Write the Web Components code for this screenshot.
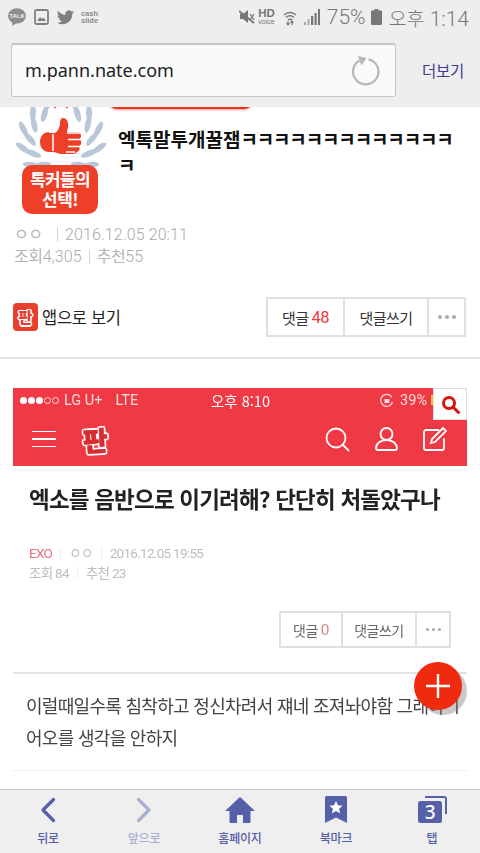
<!DOCTYPE html>
<html lang="ko">
<head>
<meta charset="utf-8">
<title>m.pann.nate.com</title>
<style>
  html, body { margin: 0; height: 100%; background: #fff; }
  body { font-family: "Noto Sans CJK KR", "Noto Sans", sans-serif; overflow: hidden; }
</style>
</head>
<body>
<phone-screen>
  <status-bar slot="top"></status-bar>
  <url-bar slot="top" url="m.pann.nate.com"></url-bar>
  <article-head>엑톡말투개꿀잼<span style="letter-spacing:-1.150px">ㅋㅋㅋㅋㅋㅋㅋㅋㅋㅋㅋㅋㅋㅋ</span></article-head>
  <action-row comments="48"></action-row>
  <embedded-shot></embedded-shot>
  <fab-button slot="over"></fab-button>
  <bottom-nav slot="bottom"></bottom-nav>
</phone-screen>

<script>
const KR = `"Noto Sans CJK KR", "Noto Sans", sans-serif`;

class PhoneScreen extends HTMLElement {
  constructor() {
    super();
    this.attachShadow({ mode: "open" });
    this.shadowRoot.innerHTML = `
    <style>
      :host { display: flex; flex-direction: column; width: 480px; height: 853px; position: relative; overflow: hidden; }
      .top { flex: none; position: relative; z-index: 2; background: #eeeeee; height: 107px; }
      .page { flex: 1; min-height: 0; overflow: hidden; background: #fff; }
      .bottom { flex: none; }
    </style>
    <div class="top"><slot name="top"></slot></div>
    <div class="page"><slot></slot></div>
    <slot name="over"></slot>
    <div class="bottom"><slot name="bottom"></slot></div>`;
  }
}

class StatusBar extends HTMLElement {
  constructor() {
    super();
    this.attachShadow({ mode: "open" });
    this.shadowRoot.innerHTML = `
    <style>
      :host { display: flex; align-items: center; height: 34px; padding: 0 11px 0 8px; color: #777; font-family: "Roboto", sans-serif; }
      svg { display: block; flex: none; }
      .left { display: flex; align-items: center; gap: 8px; }
      .cash { font: 700 7.5px/7.5px "Liberation Sans", sans-serif; color: #8a8a8a; text-align: center; margin-left: -1px; }
      .right { margin-left: auto; display: flex; align-items: center; }
      .hd { font: 700 11.500px/10px "Liberation Sans", sans-serif; text-align: center; margin: 0 8px 0 3px; color: #777; }
      .hd small { display: block; font-size: 7px; font-weight: 400; line-height: 8px; }
      .pct { font-size: 21px; font-weight: 300; margin: 0 5px 0 7px; color: #777; }
      .time { font: 300 21px "Roboto", ${KR}; margin-left: 7px; color: #777; white-space: nowrap; }
      .time span { font: 300 19.500px ${KR}; }
    </style>
    <div class="left">
      <svg width="18" height="18" viewBox="0 0 18 18"><ellipse cx="9" cy="7.8" rx="9" ry="7.6" fill="#8c8c8c"/><path d="M4 13l.6 5 4.400-3.400z" fill="#8c8c8c"/><text x="9" y="10" font-family="Liberation Sans" font-size="6" font-weight="700" text-anchor="middle" fill="#eee">TALK</text></svg>
      <svg width="15" height="16" viewBox="0 0 15 16"><rect x="1" y="1" width="13" height="14" rx="1.5" fill="none" stroke="#808080" stroke-width="1.8"/><path d="M3 12l3-4 2 2 1.500-1.500L12 12z" fill="#808080"/></svg>
      <svg width="17" height="15" viewBox="0 0 24 20"><path fill="#808080" d="M24 2.400a9.800 9.800 0 0 1-2.800.8 4.900 4.900 0 0 0 2.200-2.700 9.900 9.900 0 0 1-3.100 1.200 4.900 4.900 0 0 0-8.400 4.500A14 14 0 0 1 1.700.9a4.900 4.900 0 0 0 1.500 6.600 4.900 4.900 0 0 1-2.200-.6 4.900 4.900 0 0 0 3.900 4.900 4.900 4.900 0 0 1-2.200.1 4.900 4.900 0 0 0 4.600 3.400A9.900 9.900 0 0 1 0 17.300 14 14 0 0 0 21.500 4.900a10 10 0 0 0 2.500-2.500z"/></svg>
      <div class="cash">cash<br>slide</div>
    </div>
    <div class="right">
      <svg width="16" height="16" viewBox="0 0 16 16"><path d="M1 5h3l5-4v13l-5-4H1z" fill="#777"/><path d="M0 2l15 12" stroke="#777" stroke-width="1.800"/><path d="M11 5l4 6M15 5l-4 6" stroke="#777" stroke-width="1.300"/></svg>
      <div class="hd">HD<small>voice</small></div>
      <svg width="14" height="17" viewBox="0 0 14 17"><path d="M1 6a8.500 8.500 0 0 1 12 0M3 8.500a5.500 5.500 0 0 1 8 0M5 11a2.800 2.800 0 0 1 4 0" fill="none" stroke="#777" stroke-width="1.500"/><path d="M5 12v4M3.500 14l1.500 2 1.500-2M9 16v-4M7.500 14l1.500-2 1.500 2" fill="none" stroke="#777" stroke-width="1.100"/></svg>
      <svg width="16" height="16" viewBox="0 0 16 16" style="margin-left:7px"><path d="M0 13h2v3H0zM3.500 10h2v6h-2z" fill="#aaa"/><path d="M7 7h2.200v9H7zM10.500 4h2.200v12h-2.200zM14 0h2v16h-2z" fill="#777"/></svg>
      <span class="pct">75%</span>
      <svg width="11" height="16" viewBox="0 0 11 16"><path d="M3.500 0h4v1.500H10a1 1 0 0 1 1 1V15a1 1 0 0 1-1 1H1a1 1 0 0 1-1-1V2.500a1 1 0 0 1 1-1h2.500z" fill="#777"/></svg>
      <span class="time"><span>오후</span> 1:14</span>
    </div>`;
  }
}

class UrlBar extends HTMLElement {
  constructor() {
    super();
    this.attachShadow({ mode: "open" });
    this.shadowRoot.innerHTML = `
    <style>
      :host { display: flex; align-items: center; padding: 9px 16px 0 11px; }
      .box { flex: none; box-sizing: border-box; width: 385px; height: 54px; background: #fafafa; border: 1px solid #c6c6c6; border-top: 2px solid #c6c6c6; border-radius: 3px; display: flex; align-items: center; justify-content: space-between; padding: 0 15px 0 13px; }
      .url { font: 400 18px "Noto Sans", sans-serif; color: #222; margin-top: -2px; }
      .more { margin-left: auto; font: 400 15.500px ${KR}; color: #3f3a92; letter-spacing: -.3px; }
      svg { display: block; }
    </style>
    <div class="box">
      <span class="url">${this.getAttribute("url")}</span>
      <svg width="30" height="30" viewBox="0 0 30 30" fill="none"><path d="M18.500 3.200A12.700 12.700 0 1 1 9.500 4.500" stroke="#b7b7b7" stroke-width="2.200"/><path d="M8 0l8.500 2-5 7.500z" fill="#b7b7b7"/></svg>
    </div>
    <span class="more">더보기</span>`;
  }
}

class ArticleHead extends HTMLElement {
  constructor() {
    super();
    this.attachShadow({ mode: "open" });
    let leaves = "";
    for (let i = 0; i < 10; i++) {
      const a = 18 + i * 14;
      const r = i % 2 ? 31 : 39;
      for (const s of [-1, 1]) {
        leaves += `<ellipse cx="0" cy="0" rx="3" ry="8.500" fill="#b9c8d8" transform="translate(46 33) rotate(${s * a}) translate(0 ${-r}) rotate(${-s * 48})"/>`;
      }
    }
    this.shadowRoot.innerHTML = `
    <style>
      :host { display: block; position: relative; height: 190px; color: #111; }
      .pill { position: absolute; left: 108px; top: -8px; width: 145px; height: 10px; border-radius: 0 0 9px 9px; background: #f2301c; box-shadow: 0 1px 2px #f59a8e; }
      .top { display: flex; height: 107px; }
      .badge { flex: none; width: 92px; height: 107px; margin-left: 15px; position: relative; }
      .badge svg { display: block; position: absolute; left: 0; top: 0; }
      .tag { position: absolute; left: 7px; top: 58px; width: 76px; height: 49px; box-sizing: border-box; border-radius: 10px; background: #ee3f28; color: #fff; font: 700 17px/20px ${KR}; text-align: center; padding-top: 4px; letter-spacing: -.6px; }
      .title { flex: 1; margin: 19px 14px 0 11px; font: 700 19px/26px ${KR}; letter-spacing: 0; word-break: break-all; }
      .meta { padding: 9px 0 0 14px; font: 300 16px/21px "Roboto", ${KR}; color: #aaa; white-space: nowrap; letter-spacing: .1px; }
      .meta i { font-style: normal; display: inline-block; width: 1px; height: 15px; background: #d4d4d4; margin: 0 7px; vertical-align: -2px; }
      .kr { font-family: ${KR}; font-weight: 400; letter-spacing: -.4px; color: #b4b4b4; }
      .who { display: inline-block; width: 36px; }
    </style>
    <div class="pill"></div>
    <div class="top">
      <div class="badge">
        <svg width="92" height="70" viewBox="0 0 92 70">${leaves}
          <path d="M39 -2l1.500 3M53 -2l-1.500 3" stroke="#ee3f28" stroke-width="2"/>
          <path d="M34 26h6c3-2 5-6 5-10 0-3 1-5 3-5 4 0 6 5 5 9l-1 5h10c5 0 5 6 2 7 3 1 3 6 0 7 1 2 1 5-2 6-1 1-2 2-4 2H47c-4 0-6-2-9-2h-4c-5 0-9-4-9-10s4-10 9-10z" fill="#ee3f28" stroke="#fff" stroke-width="2" paint-order="stroke"/>
          <path d="M38 27v17M52 26h13M53 32.500h13M53 39.500h12M51 45h9" stroke="#fff" stroke-width="1.500" fill="none"/>
        </svg>
        <div class="tag">톡커들의<br>선택!</div>
      </div>
      <div class="title"><slot></slot></div>
    </div>
    <div class="meta"><span class="kr who">ㅇㅇ</span><i></i>2016.12.05 20:11<br><span class="kr">조회</span>4,305<i></i><span class="kr">추천</span>55</div>`;
  }
}

class ReplyButtons extends HTMLElement {
  constructor() {
    super();
    this.attachShadow({ mode: "open" });
    this.shadowRoot.innerHTML = `
    <style>
      :host { display: inline-flex; box-sizing: border-box; height: var(--h, 40px); border: 2px solid #e0e0e0; font: 400 var(--fs, 15px) ${KR}; color: #333; background: #fff; letter-spacing: -.5px; }
      div { display: flex; align-items: center; justify-content: center; box-sizing: border-box; white-space: nowrap; }
      div + div { border-left: 2px solid #e0e0e0; }
      .a { width: var(--a, 75px); }
      .b { width: var(--b, 84px); }
      .c { width: var(--c, 37px); color: #aaa; gap: 3px; }
      .c span { width: var(--d, 4px); height: var(--d, 4px); border-radius: 50%; background: #aaa; }
      b { font-weight: 400; color: var(--num, #f03c3c); font-family: "Roboto", sans-serif; font-size: 1.1em; margin-left: 3px; }
    </style>
    <div class="a">댓글<b>${this.getAttribute("count")}</b></div>
    <div class="b">댓글쓰기</div>
    <div class="c"><span></span><span></span><span></span></div>`;
  }
}

class ActionRow extends HTMLElement {
  constructor() {
    super();
    this.attachShadow({ mode: "open" });
    this.shadowRoot.innerHTML = `
    <style>
      :host { display: block; height: 60px; border-bottom: 2px solid #e2e2e2; }
      .row { display: flex; align-items: center; padding: 0 14px 0 13px; height: 40px; }
      .app { display: flex; align-items: center; gap: 4px; font: 400 16.500px ${KR}; color: #222; letter-spacing: -.3px; }
      .icon { width: 25px; height: 28px; border-radius: 4px; background: #e8402f; color: #e8402f; font: 900 15px/27px ${KR}; text-align: center; letter-spacing: 0;
        text-shadow: 1.500px 0 #fff, -1.500px 0 #fff, 0 1.500px #fff, 0 -1.500px #fff, 1px 1px #fff, -1px 1px #fff, 1px -1px #fff, -1px -1px #fff; }
      reply-buttons { margin-left: auto; }
    </style>
    <div class="row">
      <div class="app"><div class="icon">판</div>앱으로 보기</div>
      <reply-buttons count="${this.getAttribute("comments")}"></reply-buttons>
    </div>`;
  }
}

class EmbeddedShot extends HTMLElement {
  constructor() {
    super();
    this.attachShadow({ mode: "open" });
    this.shadowRoot.innerHTML = `
    <style>
      :host { display: block; position: relative; margin: 29px 13px 0; color: #333; }
      .blur { filter: blur(.35px); }
      .red { background: #ef3a46; height: 78px; color: #fff; }
      .ios { display: flex; align-items: center; height: 24px; padding: 0 7px; font: 400 14.500px "Roboto", sans-serif; color: #fbdcdc; position: relative; }
      .dots { display: flex; gap: 1px; margin-right: 5px; }
      .dots u { width: 7px; height: 7px; border-radius: 50%; background: #fff; box-sizing: border-box; }
      .dots u.o { background: none; border: 1px solid #fbdcdc; }
      .lte { margin-left: 13px; }
      .clock { position: absolute; left: 198px; font: 400 14.500px ${KR}; color: #fff; white-space: nowrap; }
      .batt { margin-left: auto; margin-right: 26px; display: flex; align-items: center; gap: 6px; }
      .batt s { width: 3px; height: 10px; background: #f3c63f; margin-left: -2px; }
      .nav { display: flex; align-items: center; height: 54px; padding: 0 20px 6px 19px; }
      .burger { width: 24px; height: 14px; border-top: 1.500px solid #fff; border-bottom: 1.500px solid #fff; position: relative; }
      .burger::after { content: ""; position: absolute; left: 0; right: 0; top: 6px; height: 1.500px; background: #fff; }
      .logo { margin-left: 27px; font: 900 27px/1 ${KR}; color: #d92a30; -webkit-text-stroke: .6px #d92a30; transform: rotate(-3deg);
        text-shadow: 2px 0 #fff, -2px 0 #fff, 0 2px #fff, 0 -2px #fff, 1.500px 1.500px #fff, -1.500px 1.500px #fff, 1.500px -1.500px #fff, -1.500px -1.500px #fff; }
      .tools { margin-left: auto; display: flex; align-items: center; gap: 25px; }
      svg { display: block; }
      h2 { margin: 0; padding: 17px 16px 0; font: 700 22.500px/30px ${KR}; color: #222; letter-spacing: -.8px; white-space: nowrap; }
      .meta { margin-top: 30px; padding-left: 16px; font: 400 13.500px/20px "Roboto", ${KR}; color: #bdbdbd; letter-spacing: -.7px; white-space: nowrap; }
      .meta em { font-style: normal; color: #e0707a; }
      .meta i { display: inline-block; width: 1px; height: 12px; background: #eee; margin: 0 8px; vertical-align: -1px; }
      .btns { display: flex; justify-content: flex-end; padding: 28px 16px 0 0; }
      reply-buttons { --h: 37px; --fs: 14px; --a: 60px; --b: 74px; --c: 34px; --d: 3px; --num: #e0848c; color: #666; }
      .body { margin-top: 24px; box-sizing: border-box; border-top: 2px solid #e4e4e4; border-bottom: 1px solid #eee; padding: 15px 0 0 13px; height: 99px; font: 400 18px/32px ${KR}; color: #444; letter-spacing: -.7px; white-space: nowrap; overflow: hidden; }
      .find { position: absolute; right: 0; top: 0; width: 34px; height: 32px; box-sizing: border-box; background: #fff; border: 1px solid #ddd; display: flex; align-items: center; justify-content: center; }
    </style>
    <div class="blur">
      <div class="red">
        <div class="ios"><span class="dots"><u></u><u></u><u></u><u class="o"></u><u class="o"></u></span>LG U+<span class="lte">LTE</span><span class="clock">오후 8:10</span>
          <span class="batt"><svg width="14" height="14" viewBox="0 0 14 14" fill="none"><path d="M12 4.500A6 6 0 1 0 12.500 9" stroke="#fbdcdc" stroke-width="1.200"/><rect x="4.500" y="6" width="5" height="4" fill="#fbdcdc"/></svg>39%<s></s></span></div>
        <div class="nav">
          <div class="burger"></div>
          <div class="logo">판</div>
          <div class="tools">
            <svg width="25" height="25" viewBox="0 0 25 25" fill="none" stroke="#fff" stroke-width="1.800"><circle cx="11" cy="11" r="9.500"/><path d="M18 18l6 6"/></svg>
            <svg width="23" height="24" viewBox="0 0 23 24" fill="none" stroke="#fff" stroke-width="1.800"><circle cx="11.500" cy="7" r="6"/><path d="M11.500 13C5 13 1 17 1 21c0 1.500 1 2 2 2h17c1 0 2-.5 2-2 0-4-4-8-10.500-8z"/></svg>
            <svg width="24" height="24" viewBox="0 0 24 24" fill="none" stroke="#fff" stroke-width="1.800"><path d="M16 3H3a2 2 0 0 0-2 2v16a2 2 0 0 0 2 2h16a2 2 0 0 0 2-2V11"/><path d="M8 16l1-4L20 1l3 3-11 11z"/></svg>
          </div>
        </div>
      </div>
      <h2>엑소를 음반으로 이기려해? 단단히 처돌았구나</h2>
      <div class="meta"><em>EXO</em><i></i>ㅇㅇ<i></i>2016.12.05 19:55<br>조회 84<i></i>추천 23</div>
      <div class="btns"><reply-buttons count="0"></reply-buttons></div>
      <div class="body">이럴때일수록 침착하고 정신차려서 쟤네 조져놔야함 그래야 ㅣ<br>어오를 생각을 안하지</div>
    </div>
    <div class="find"><svg width="19" height="19" viewBox="0 0 19 19" fill="none" stroke="#d8140c" stroke-width="3"><circle cx="8" cy="8" r="5.500"/><path d="M12 12l5.500 5.500" stroke-linecap="round"/></svg></div>`;
  }
}

class FabButton extends HTMLElement {
  constructor() {
    super();
    this.attachShadow({ mode: "open" });
    this.shadowRoot.innerHTML = `
    <style>
      :host { display: block; position: absolute; left: 414px; top: 662px; width: 48px; height: 48px; border-radius: 50%; background: #f02a0e; box-shadow: 5px 5px 1px rgba(120,120,120,.4); }
      svg { display: block; margin: 12px; }
    </style>
    <svg width="24" height="24" viewBox="0 0 24 24"><path d="M12 0v24M0 12h24" stroke="#fff" stroke-width="2.400"/></svg>`;
  }
}

class BottomNav extends HTMLElement {
  constructor() {
    super();
    this.attachShadow({ mode: "open" });
    const C = "#5560a8";
    const items = [
      ["뒤로", `<svg width="16" height="26" viewBox="0 0 16 26" fill="none"><path d="M13.500 2.500L3 13l10.500 10.500" stroke="${C}" stroke-width="3.200" stroke-linecap="round" stroke-linejoin="round"/></svg>`, ""],
      ["앞으로", `<svg width="16" height="26" viewBox="0 0 16 26" fill="none"><path d="M2.500 2.500L13 13 2.500 23.500" stroke="#a9aed2" stroke-width="3.200" stroke-linecap="round" stroke-linejoin="round"/></svg>`, "off"],
      ["홈페이지", `<svg width="30" height="26" viewBox="0 0 30 26"><path d="M15 0l15 14h-4.500v11a1 1 0 0 1-1 1H18v-8h-6v8H5.500a1 1 0 0 1-1-1V14H0z" fill="${C}"/></svg>`, ""],
      ["북마크", `<svg width="22" height="28" viewBox="0 0 22 28"><path d="M1.500 0h19A1.500 1.500 0 0 1 22 1.500V27l-11-5.500L0 27V1.500A1.500 1.500 0 0 1 1.500 0z" fill="${C}"/><path d="M11 5l1.900 4.200 4.600.5-3.400 3 1 4.500-4.100-2.300-4.100 2.300 1-4.500-3.400-3 4.600-.5z" fill="#fff"/></svg>`, ""],
      ["탭", `<svg width="29" height="28" viewBox="0 0 29 28"><path d="M7 1h19a2 2 0 0 1 2 2v15" fill="none" stroke="${C}" stroke-width="2"/><rect x="0" y="5" width="24" height="22" rx="2.500" fill="${C}"/><text x="12" y="23" font-family="Noto Sans" font-size="19" text-anchor="middle" fill="#fff">3</text></svg>`, ""]
    ];
    this.shadowRoot.innerHTML = `
    <style>
      :host { display: grid; grid-template-columns: 96px 96px 96px 96px 96px; box-sizing: border-box; height: 64px; background: #efefef; border-top: 1px solid #c9c9c9; }
      a { display: flex; flex-direction: column; align-items: center; padding-top: 6px; font: 500 12px/16px ${KR}; color: ${C}; letter-spacing: -.2px; }
      a.off { color: #a9aed2; }
      .i { height: 28px; display: flex; align-items: center; margin-bottom: 6px; }
      svg { display: block; }
    </style>
    ${items.map(([t, s, c]) => `<a class="${c}"><span class="i">${s}</span>${t}</a>`).join("")}`;
  }
}

customElements.define("phone-screen", PhoneScreen);
customElements.define("status-bar", StatusBar);
customElements.define("url-bar", UrlBar);
customElements.define("article-head", ArticleHead);
customElements.define("reply-buttons", ReplyButtons);
customElements.define("action-row", ActionRow);
customElements.define("embedded-shot", EmbeddedShot);
customElements.define("fab-button", FabButton);
customElements.define("bottom-nav", BottomNav);
</script>
</body>
</html>
